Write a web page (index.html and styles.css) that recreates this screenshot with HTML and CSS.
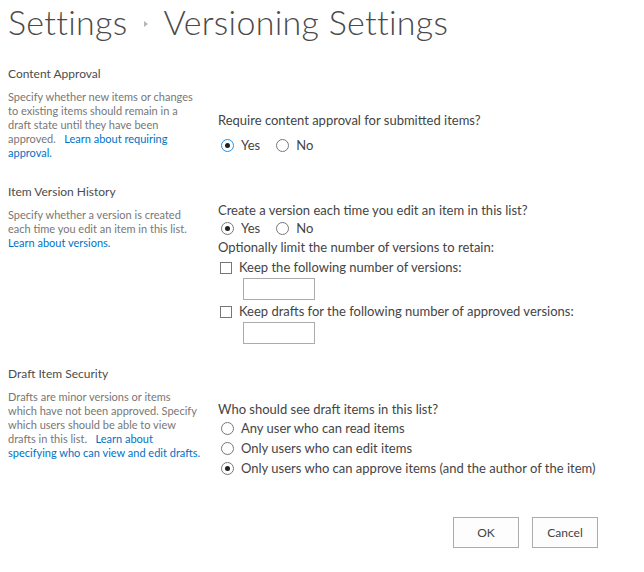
FILE: index.html
```html
<!DOCTYPE html>
<html lang="en">
<head>
  <meta charset="UTF-8">
  <meta name="viewport" content="width=device-width, initial-scale=1.0">
  <title>Versioning Settings</title>
  <link rel="stylesheet" href="styles.css">
</head>
<body>
  <div class="page">
    <!-- Page title with breadcrumb -->
    <h1 class="page-title">
      <span>Settings</span>
      <span class="crumb-arrow"></span>
      <span>Versioning Settings</span>
    </h1>

    <form class="settings-form">
      <!-- Content Approval -->
      <div class="section section-approval">
        <div class="section-info">
          <h3 class="section-title">Content Approval</h3>
          <p class="section-desc">Specify whether new items or changes<br>to existing items should remain in a<br>draft state until they have been<br>approved. &nbsp; <a href="#">Learn about requiring<br>approval.</a></p>
        </div>
        <div class="section-controls">
          <div class="question">Require content approval for submitted items?</div>
          <div class="radio-row radio-row-first">
            <label class="option"><input type="radio" name="approval" class="focused" checked> Yes</label>
            <label class="option"><input type="radio" name="approval"> No</label>
          </div>
        </div>
      </div>

      <!-- Item Version History -->
      <div class="section section-history">
        <div class="section-info">
          <h3 class="section-title">Item Version History</h3>
          <p class="section-desc">Specify whether a version is created<br>each time you edit an item in this list.<br><a href="#">Learn about versions.</a></p>
        </div>
        <div class="section-controls">
          <div class="question">Create a version each time you edit an item in this list?</div>
          <div class="radio-row">
            <label class="option"><input type="radio" name="versioning" checked> Yes</label>
            <label class="option"><input type="radio" name="versioning"> No</label>
          </div>
          <div class="question">Optionally limit the number of versions to retain:</div>
          <label class="option check-row"><input type="checkbox"> Keep the following number of versions:</label>
          <input type="text" class="num-box">
          <label class="option check-row"><input type="checkbox"> Keep drafts for the following number of approved versions:</label>
          <input type="text" class="num-box">
        </div>
      </div>

      <!-- Draft Item Security -->
      <div class="section section-security">
        <div class="section-info">
          <h3 class="section-title">Draft Item Security</h3>
          <p class="section-desc">Drafts are minor versions or items<br>which have not been approved. Specify<br>which users should be able to view<br>drafts in this list. &nbsp; <a href="#">Learn about<br>specifying who can view and edit drafts.</a></p>
        </div>
        <div class="section-controls">
          <div class="question">Who should see draft items in this list?</div>
          <label class="option stack-row"><input type="radio" name="drafts"> Any user who can read items</label>
          <label class="option stack-row"><input type="radio" name="drafts"> Only users who can edit items</label>
          <label class="option stack-row"><input type="radio" name="drafts" checked> Only users who can approve items (and the author of the item)</label>
        </div>
      </div>

      <div class="buttons">
        <button type="button" class="btn">OK</button>
        <button type="button" class="btn">Cancel</button>
      </div>
    </form>
  </div>
</body>
</html>
```

FILE: styles.css
```css
/* General Styles */
body {
  font-family: Lato, "Liberation Sans", sans-serif;
  background-color: #fff;
  color: #444;
  margin: 0;
  padding: 0;
}

.page {
  padding: 0 8px;
  width: 620px;
}

/* Title */
.page-title {
  margin: 0;
  font-size: 34px;
  font-weight: 300;
  line-height: 44px;
  letter-spacing: 0.3px;
  color: #4a4a4a;
  display: flex;
  align-items: center;
}

.crumb-arrow {
  display: inline-block;
  width: 0;
  height: 0;
  margin: 4px 15px 0 17px;
  border-top: 3px solid transparent;
  border-bottom: 3px solid transparent;
  border-left: 4px solid #b5b5b5;
}

/* Sections */
.section {
  display: grid;
  grid-template-columns: 192px 1fr;
  column-gap: 18px;
}

.section-approval {
  margin-top: 21px;
}

.section-history {
  margin-top: 23px;
}

.section-security {
  margin-top: 21px;
}

.section-title {
  margin: 0;
  font-size: 12px;
  font-weight: normal;
  line-height: 18px;
  color: #4c4c4c;
}

.section-desc {
  margin: 7px 0 0;
  font-size: 11px;
  line-height: 14px;
  color: #777;
  white-space: nowrap;
}

.section-desc a {
  color: #0072c6;
  text-decoration: none;
}

.section-approval .section-controls {
  padding-top: 46px;
}

.section-history .section-controls {
  padding-top: 18px;
}

.section-security .section-controls {
  padding-top: 35px;
}

.question {
  font-size: 13px;
  line-height: 18px;
}

.radio-row {
  display: flex;
  gap: 16px;
  margin-left: 3px;
}

.radio-row-first {
  margin-top: 7px;
}

.option {
  display: flex;
  align-items: center;
  gap: 7px;
  font-size: 13px;
  line-height: 19px;
}

.check-row {
  margin-left: 2px;
  margin-top: 2px;
}

.stack-row {
  margin-left: 3px;
  margin-top: 1px;
}

/* Custom radios and checkboxes */
input[type="radio"] {
  appearance: none;
  -webkit-appearance: none;
  margin: 0;
  width: 13px;
  height: 13px;
  border: 1px solid #777;
  border-radius: 50%;
  box-sizing: border-box;
  position: relative;
  background: #fff;
}

input[type="radio"]:checked::after {
  content: "";
  position: absolute;
  left: 3px;
  top: 3px;
  width: 5px;
  height: 5px;
  border-radius: 50%;
  background: #222;
}

input[type="radio"].focused {
  border-color: #2a8dd4;
}

input[type="checkbox"] {
  appearance: none;
  -webkit-appearance: none;
  margin: 0;
  width: 12px;
  height: 12px;
  border: 1px solid #777;
  box-sizing: border-box;
  background: #fff;
}

.num-box {
  display: block;
  margin: 1px 0 0 25px;
  width: 72px;
  height: 22px;
  box-sizing: border-box;
  border: 1px solid #ababab;
  padding: 2px;
}

/* Buttons */
.buttons {
  display: flex;
  justify-content: flex-end;
  gap: 13px;
  margin-top: 39px;
  padding-right: 30px;
}

.btn {
  width: 66px;
  height: 31px;
  border: 1px solid #ababab;
  background-color: #fdfdfd;
  font-family: Lato, "Liberation Sans", sans-serif;
  font-size: 12px;
  color: #444;
  cursor: pointer;
}
```
